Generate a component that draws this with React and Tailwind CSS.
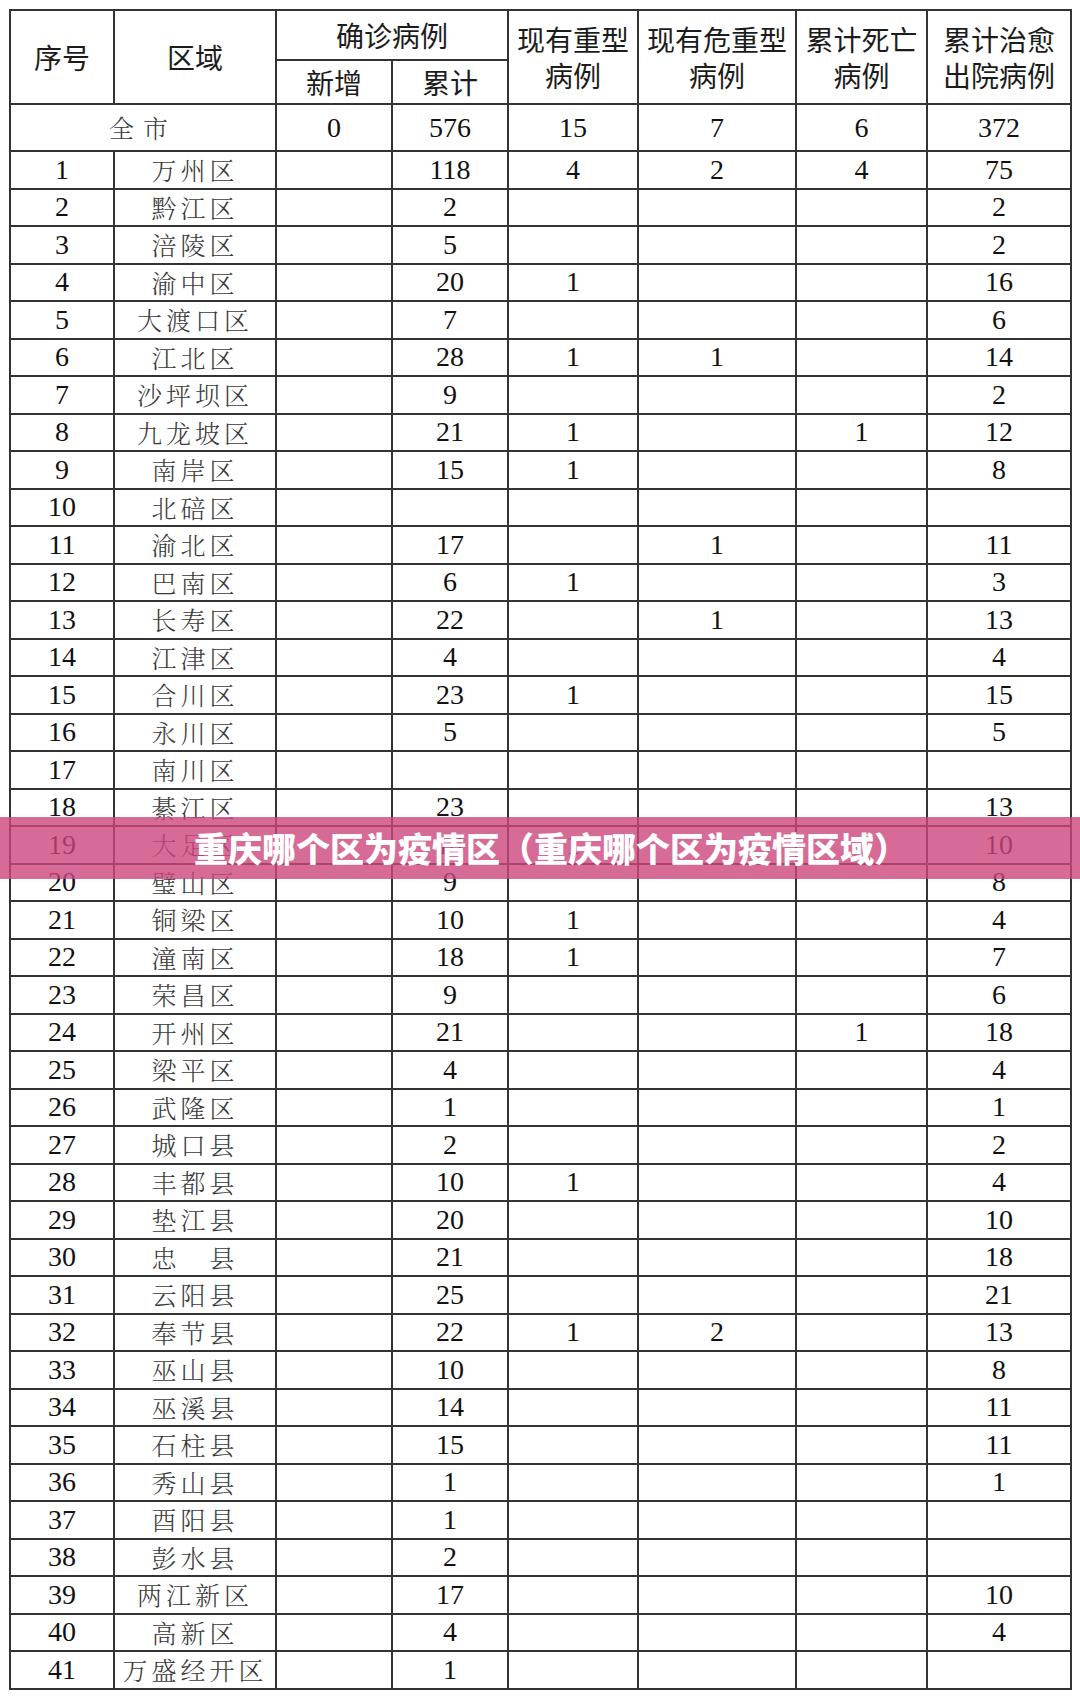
import React from 'react';

const rows = [
  [1, '万州区', '', 118, 4, 2, 4, 75],
  [2, '黔江区', '', 2, '', '', '', 2],
  [3, '涪陵区', '', 5, '', '', '', 2],
  [4, '渝中区', '', 20, 1, '', '', 16],
  [5, '大渡口区', '', 7, '', '', '', 6],
  [6, '江北区', '', 28, 1, 1, '', 14],
  [7, '沙坪坝区', '', 9, '', '', '', 2],
  [8, '九龙坡区', '', 21, 1, '', 1, 12],
  [9, '南岸区', '', 15, 1, '', '', 8],
  [10, '北碚区', '', '', '', '', '', ''],
  [11, '渝北区', '', 17, '', 1, '', 11],
  [12, '巴南区', '', 6, 1, '', '', 3],
  [13, '长寿区', '', 22, '', 1, '', 13],
  [14, '江津区', '', 4, '', '', '', 4],
  [15, '合川区', '', 23, 1, '', '', 15],
  [16, '永川区', '', 5, '', '', '', 5],
  [17, '南川区', '', '', '', '', '', ''],
  [18, '綦江区', '', 23, '', '', '', 13],
  [19, '大足区', '', 14, 1, '', '', 10],
  [20, '璧山区', '', 9, '', '', '', 8],
  [21, '铜梁区', '', 10, 1, '', '', 4],
  [22, '潼南区', '', 18, 1, '', '', 7],
  [23, '荣昌区', '', 9, '', '', '', 6],
  [24, '开州区', '', 21, '', '', 1, 18],
  [25, '梁平区', '', 4, '', '', '', 4],
  [26, '武隆区', '', 1, '', '', '', 1],
  [27, '城口县', '', 2, '', '', '', 2],
  [28, '丰都县', '', 10, 1, '', '', 4],
  [29, '垫江县', '', 20, '', '', '', 10],
  [30, '忠　县', '', 21, '', '', '', 18],
  [31, '云阳县', '', 25, '', '', '', 21],
  [32, '奉节县', '', 22, 1, 2, '', 13],
  [33, '巫山县', '', 10, '', '', '', 8],
  [34, '巫溪县', '', 14, '', '', '', 11],
  [35, '石柱县', '', 15, '', '', '', 11],
  [36, '秀山县', '', 1, '', '', '', 1],
  [37, '酉阳县', '', 1, '', '', '', ''],
  [38, '彭水县', '', 2, '', '', '', ''],
  [39, '两江新区', '', 17, '', '', '', 10],
  [40, '高新区', '', 4, '', '', '', 4],
  [41, '万盛经开区', '', 1, '', '', '', ''],
];

const cell = 'border-2 border-[#333] p-0 text-center align-middle';
const head = `${cell} font-['Noto_Sans_CJK_SC',sans-serif] text-[28px] font-normal leading-[36px] text-[#1c1c1c]`;
const num = `${cell} font-['Liberation_Serif',serif] text-[28px] leading-none text-[#111]`;
const name = `${cell} font-['Noto_Serif_CJK_SC','Noto_Sans_CJK_SC',serif] font-light text-[25px] leading-none tracking-[4px] text-[#3a3a3a]`;

export default function App() {
  return (
    <div className="relative w-[1080px] h-[1696px] bg-white overflow-hidden">
      <div className="pt-[9px] pl-[9px]">
        <table className="table-fixed border-collapse w-[1061px]">
          <colgroup>
            <col className="w-[104px]" />
            <col className="w-[162px]" />
            <col className="w-[116px]" />
            <col className="w-[116px]" />
            <col className="w-[130px]" />
            <col className="w-[158px]" />
            <col className="w-[131px]" />
            <col className="w-[144px]" />
          </colgroup>
          <thead>
            <tr className="h-[50px]">
              <th rowSpan={2} className={head}>序号</th>
              <th rowSpan={2} className={head}>区域</th>
              <th colSpan={2} className={head}>确诊病例</th>
              <th rowSpan={2} className={head}>现有重型<br />病例</th>
              <th rowSpan={2} className={head}>现有危重型<br />病例</th>
              <th rowSpan={2} className={head}>累计死亡<br />病例</th>
              <th rowSpan={2} className={head}>累计治愈<br />出院病例</th>
            </tr>
            <tr className="h-[44px]">
              <th className={head}>新增</th>
              <th className={head}>累计</th>
            </tr>
          </thead>
          <tbody>
            <tr className="h-[47px]">
              <td colSpan={2} className={`${name} tracking-[9px]`}>全市</td>
              <td className={num}>0</td>
              <td className={num}>576</td>
              <td className={num}>15</td>
              <td className={num}>7</td>
              <td className={num}>6</td>
              <td className={num}>372</td>
            </tr>
            {rows.map((r) => (
              <tr key={r[0]} className="h-[37.5px]">
                <td className={num}>{r[0]}</td>
                <td className={name}>{r[1]}</td>
                <td className={num}>{r[2]}</td>
                <td className={num}>{r[3]}</td>
                <td className={num}>{r[4]}</td>
                <td className={num}>{r[5]}</td>
                <td className={num}>{r[6]}</td>
                <td className={num}>{r[7]}</td>
              </tr>
            ))}
          </tbody>
        </table>
      </div>

      {/* title band laid over the table */}
      <div className="absolute left-0 right-0 top-[817px] h-[62px] pl-[22px] bg-[rgba(205,70,125,0.8)] flex items-center justify-center">
        <span className="font-['Noto_Sans_CJK_SC',sans-serif] font-black text-[34px] leading-none text-white">
          重庆哪个区为疫情区（重庆哪个区为疫情区域）
        </span>
      </div>
    </div>
  );
}
